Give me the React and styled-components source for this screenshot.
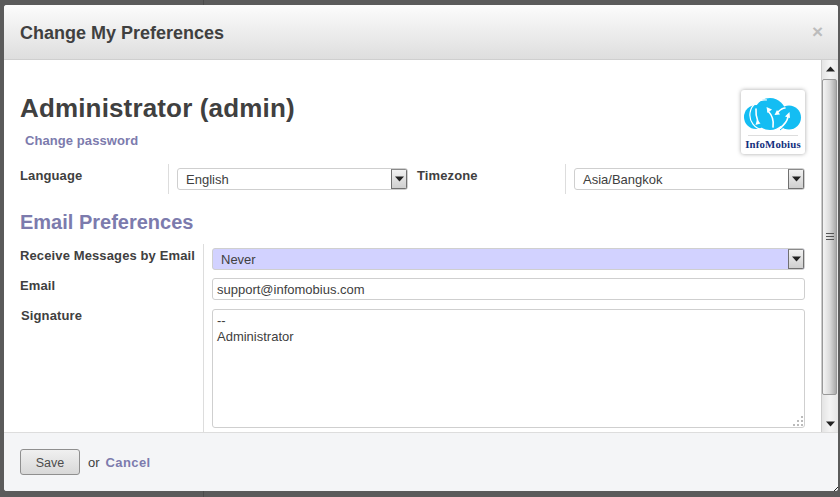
import React from "react";
import styled, { createGlobalStyle } from "styled-components";

const Global = createGlobalStyle`
  html, body { margin: 0; padding: 0; background: #5b5b5b; }
  body { font-family: "Liberation Sans", Arial, sans-serif; color: #4c4c4c; }
`;

const Backdrop = styled.div`
  width: 840px; height: 497px; box-sizing: border-box;
  padding: 5px 2px 6px 4px; overflow: hidden;
  background: linear-gradient(90deg, transparent 203px, #4c4c4c 203px, #4c4c4c 204px, transparent 204px) #5b5b5b;
`;
const Dialog = styled.div`
  height: 486px; display: flex; flex-direction: column; background: #fff;
  border-radius: 3px; overflow: hidden;
`;
const Header = styled.header`
  height: 55px; flex: none; box-sizing: border-box; padding: 0 16px;
  display: flex; align-items: center; justify-content: space-between;
  background: linear-gradient(#fcfcfc, #dedede); border-bottom: 1px solid #cfcfcf;
`;
const Title = styled.h2`
  margin: 0; padding-top: 2px; font-size: 18px; font-weight: bold; color: #404040; line-height: 52px;
`;
const Close = styled.span`
  font-size: 19px; font-weight: bold; color: #bcbcbc; line-height: 1; margin-right: -1px; margin-top: -2px;
`;
const Middle = styled.div`
  flex: 1; min-height: 0; display: flex; background: #fff;
`;
const Content = styled.div`
  flex: 1; min-width: 0; box-sizing: border-box; padding: 0 16px 0 16px; overflow: hidden;
`;
const Top = styled.div`
  display: flex; justify-content: space-between; height: 104px; box-sizing: border-box;
  padding-top: 30px;
`;
const Name = styled.h1`
  margin: 0; font-size: 26px; line-height: 36px; font-weight: bold; color: #404040; letter-spacing: 0.15px;
`;
const LinkLine = styled.div`
  padding-left: 5px; margin-top: 6px; line-height: 16px;
`;
const Link = styled.a`
  font-size: 13px; font-weight: bold; color: #7c7bad; letter-spacing: 0.08px;
`;
const LogoCard = styled.div`
  width: 64px; height: 64px; background: #fff; border-radius: 3px;
  box-shadow: 0 0 4px rgba(0,0,0,.35); flex: none;
`;
const Row = styled.div`
  display: flex; height: 30px;
`;
const Label = styled.label`
  box-sizing: border-box; flex: none; width: ${p => p.$w}px;
  padding-left: ${p => p.$pad || 0}px; padding-top: 4px;
  font-size: 13px; line-height: 15px; font-weight: bold; color: #404040; letter-spacing: 0.12px;
`;
const Field = styled.div`
  box-sizing: border-box; flex: ${p => p.$w ? "none" : 1}; width: ${p => p.$w ? p.$w + "px" : "auto"};
  border-left: 1px solid #ddd; padding: 4px 0 0 8px;
`;
const SelectBox = styled.div`
  height: 22px; box-sizing: border-box; border: 1px solid #cfcfcf; border-radius: 3px;
  background: ${p => p.$required ? "#d2d2ff" : "#fff"}; display: flex; align-items: center; justify-content: space-between;
  padding-left: 8px; font-size: 13px; color: #404040; overflow: hidden;
`;
const ArrowButton = styled.span`
  width: 16px; height: 20px; flex: none; box-sizing: border-box;
  border: 1px solid #707070; border-top-color: #8a8a8a;
  background: linear-gradient(#f2f2f2, #cfcfcf); display: flex; align-items: center; justify-content: center;
`;
const SectionTitle = styled.h3`
  margin: 0; height: 50px; box-sizing: border-box; padding-top: 16px;
  font-size: 20px; line-height: 24px; font-weight: bold; color: #7c7bad;
`;
const EmailGrid = styled.div`
  display: flex; height: 188px;
`;
const LabelCol = styled.div`
  flex: none; width: 183px; display: flex; flex-direction: column; padding-top: 4px; gap: 15px;
`;
const FieldCol = styled.div`
  flex: 1; border-left: 1px solid #ddd; box-sizing: border-box; padding: 4px 0 0 8px;
  display: flex; flex-direction: column; gap: 8px;
`;
const StackLabel = styled.label`
  font-size: 13px; line-height: 15px; font-weight: bold; color: #404040; letter-spacing: 0.12px;
  padding-left: ${p => p.$pad || 0}px;
`;
const Input = styled.div`
  height: 22px; box-sizing: border-box; border: 1px solid #cfcfcf; border-radius: 3px;
  padding-left: 4px; font-size: 13px; line-height: 21px; color: #404040;
`;
const TextArea = styled.div`
  position: relative; height: 119px; margin-top: 1px; box-sizing: border-box; border: 1px solid #cfcfcf; border-radius: 3px;
  padding: 3px 4px; font-size: 13px; line-height: 16px; color: #404040;
`;
const Grip = styled.svg`
  position: absolute; right: 0; bottom: 0;
`;
const Scrollbar = styled.div`
  width: 17px; flex: none; display: flex; flex-direction: column; box-sizing: border-box;
  background: linear-gradient(90deg, #e4e4e4, #f4f4f4 50%, #e6e6e6); border-left: 1px solid #ccc;
`;
const ScrollArrow = styled.div`
  height: 17px; flex: none; display: flex; align-items: center; justify-content: center;
`;
const Thumb = styled.div`
  height: 316px; flex: none; margin: 2px 1px 0 0; box-sizing: border-box; border: 1px solid #999; border-radius: 2px;
  background: linear-gradient(90deg, #f4f4f4, #dcdcdc 50%, #a9a9a9);
  display: flex; align-items: center; justify-content: center;
`;
const Track = styled.div`flex: 1;`;
const Footer = styled.footer`
  height: 59px; flex: none; box-sizing: border-box; background: #f4f5f7; border-top: 1px solid #ddd;
  padding: 16px 0 0 16px; display: flex; align-items: flex-start; gap: 8px; font-size: 13px; position: relative;
`;
const SaveButton = styled.button`
  width: 60px; height: 26px; padding: 1px 0 0; border: 1px solid #8f8f8f; border-radius: 3px;
  background: linear-gradient(#f0f0f0, #d8d8d8); font: 12.5px "Liberation Sans", Arial, sans-serif; color: #4c4c4c;
`;
const Or = styled.span`
  line-height: 27px; color: #404040;
`;
const CancelLink = styled(Link)`
  line-height: 27px; margin-left: -2px; letter-spacing: 0.4px;
`;
const ResizeGrip = styled.svg`
  position: absolute; right: -2px; bottom: -6px;
`;

const Arrow = ({ up }) => (
  <svg width="9" height="6" viewBox="0 0 9 6">
    <path d={up ? "M0 5.5L4.5 .5 9 5.5z" : "M0 .5H9L4.5 5.5z"} fill="#222" />
  </svg>
);

const Select = ({ value, required }) => (
  <SelectBox $required={required}>
    {value}
    <ArrowButton><Arrow /></ArrowButton>
  </SelectBox>
);

const Logo = () => (
  <svg width="64" height="64" viewBox="0 0 64 64">
    <circle cx="29" cy="24" r="16" fill="#14bdf3" />
    <circle cx="15" cy="27" r="12" fill="#14bdf3" />
    <circle cx="48" cy="27.5" r="12" fill="#14bdf3" />
    <path d="M26 10a15 15 0 0 0-4 30" fill="none" stroke="#fff" strokeWidth="1.2" />
    <path d="M36 13a15 15 0 0 1 3 27" fill="none" stroke="#14bdf3" strokeWidth="1" />
    <g fill="none" stroke="#fff" strokeWidth="1.6" strokeLinecap="round">
      <path d="M15 19c-.5 5 .5 9 2 13" />
      <path d="M27 21c4 4 6 10 5 16" />
      <path d="M44 18c-3 0-5 2-7 4" />
      <path d="M47 27c-1 5-4 8-8 11" />
    </g>
    <g fill="#fff">
      <path d="M14.5 35l5-1.5-3.5-4z" />
      <path d="M25.5 17l1 6 4.5-3.5z" />
      <path d="M33.5 25l5.5-.5-3-4.5z" />
      <path d="M48.5 22l-4.5 4.5 5 1.5z" />
    </g>
    <rect x="7" y="45" width="50" height="1" fill="#ddd" />
    <text x="32" y="58" textAnchor="middle" fontFamily="Liberation Serif, serif" fontWeight="bold" fontSize="10.8" letterSpacing="0.15" fill="#12307d">InfoMobius</text>
  </svg>
);

export default function App() {
  return (
    <>
      <Global />
      <Backdrop>
        <Dialog>
          <Header>
            <Title>Change My Preferences</Title>
            <Close>×</Close>
          </Header>
          <Middle>
            <Content>
              <Top>
                <div>
                  <Name>Administrator (admin)</Name>
                  <LinkLine><Link>Change password</Link></LinkLine>
                </div>
                <LogoCard><Logo /></LogoCard>
              </Top>
              <Row>
                <Label $w={148}>Language</Label>
                <Field $w={240}><Select value="English" /></Field>
                <Label $w={157} $pad={9}>Timezone</Label>
                <Field><Select value="Asia/Bangkok" /></Field>
              </Row>
              <SectionTitle>Email Preferences</SectionTitle>
              <EmailGrid>
                <LabelCol>
                  <StackLabel>Receive Messages by Email</StackLabel>
                  <StackLabel>Email</StackLabel>
                  <StackLabel $pad={1}>Signature</StackLabel>
                </LabelCol>
                <FieldCol>
                  <Select value="Never" required />
                  <Input>support@infomobius.com</Input>
                  <TextArea>
                    --<br />Administrator
                    <Grip width="12" height="12" viewBox="0 0 12 12">
                      <g fill="#bbb">
                        <rect x="9" y="1" width="2" height="2" />
                        <rect x="5" y="5" width="2" height="2" />
                        <rect x="9" y="5" width="2" height="2" />
                        <rect x="1" y="9" width="2" height="2" />
                        <rect x="5" y="9" width="2" height="2" />
                        <rect x="9" y="9" width="2" height="2" />
                      </g>
                    </Grip>
                  </TextArea>
                </FieldCol>
              </EmailGrid>
            </Content>
            <Scrollbar>
              <ScrollArrow><Arrow up /></ScrollArrow>
              <Thumb>
                <svg width="8" height="9" viewBox="0 0 8 9">
                  <path d="M0 .5H8M0 3.5H8M0 6.5H8" stroke="#555" />
                </svg>
              </Thumb>
              <Track />
              <ScrollArrow><Arrow /></ScrollArrow>
            </Scrollbar>
          </Middle>
          <Footer>
            <SaveButton>Save</SaveButton>
            <Or>or</Or>
            <CancelLink>Cancel</CancelLink>
            <ResizeGrip width="12" height="12" viewBox="0 0 12 12">
              <path d="M1 11L11 1M5 11L11 5M9 11L11 9" stroke="#222" />
            </ResizeGrip>
          </Footer>
        </Dialog>
      </Backdrop>
    </>
  );
}
